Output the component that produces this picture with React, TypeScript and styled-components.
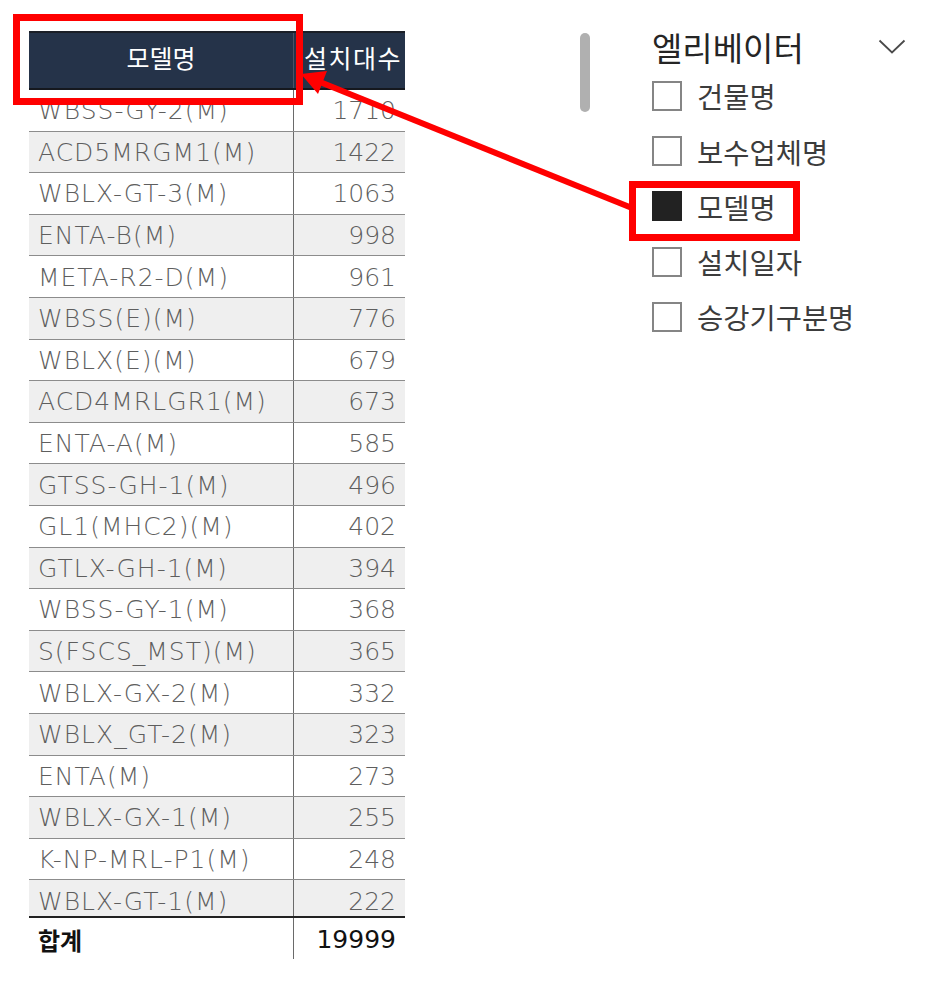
import React from "react";
import styled, { createGlobalStyle } from "styled-components";

const Global = createGlobalStyle`
  html, body { margin: 0; padding: 0; background: #ffffff; }
  body { font-family: "Noto Sans CJK KR", "Noto Sans", sans-serif; }
  #root { width: 940px; height: 985px; }
`;

const rows: [string, number][] = [
  ["WBSS-GY-2(M)", 1710],
  ["ACD5MRGM1(M)", 1422],
  ["WBLX-GT-3(M)", 1063],
  ["ENTA-B(M)", 998],
  ["META-R2-D(M)", 961],
  ["WBSS(E)(M)", 776],
  ["WBLX(E)(M)", 679],
  ["ACD4MRLGR1(M)", 673],
  ["ENTA-A(M)", 585],
  ["GTSS-GH-1(M)", 496],
  ["GL1(MHC2)(M)", 402],
  ["GTLX-GH-1(M)", 394],
  ["WBSS-GY-1(M)", 368],
  ["S(FSCS_MST)(M)", 365],
  ["WBLX-GX-2(M)", 332],
  ["WBLX_GT-2(M)", 323],
  ["ENTA(M)", 273],
  ["WBLX-GX-1(M)", 255],
  ["K-NP-MRL-P1(M)", 248],
  ["WBLX-GT-1(M)", 222],
];

const fields = ["건물명", "보수업체명", "모델명", "설치일자", "승강기구분명"];

const Page = styled.div`
  position: relative;
  width: 940px;
  height: 985px;
  display: flex;
  align-items: flex-start;
  overflow: hidden;
`;

const Table = styled.div`
  margin: 31px 0 0 29px;
  width: 376px;
  display: flex;
  flex-direction: column;
  position: relative;
`;

const HeaderRow = styled.div`
  display: grid;
  grid-template-columns: 265px 111px;
  height: 59px;
  background: #253349;
  border-top: 2px solid #1b1f27;
  border-bottom: 2px solid #15181e;
  box-sizing: border-box;
`;

const HeaderCell = styled.div<{ $align: "center" | "right" }>`
  display: flex;
  align-items: center;
  justify-content: ${(p) => (p.$align === "center" ? "center" : "flex-end")};
  padding: 0 ${(p) => (p.$align === "center" ? "0" : "3px")} 8px 0;
  color: #ffffff;
  font-size: 25px;
  letter-spacing: ${(p) => (p.$align === "center" ? "0" : "1.5px")};
  white-space: nowrap;
  overflow: hidden;
  border-right: ${(p) => (p.$align === "center" ? "1px solid #4a5466" : "none")};
`;

const Body = styled.div`
  height: 826px;
  overflow: hidden;
`;

const Row = styled.div<{ $shade: boolean }>`
  display: grid;
  grid-template-columns: 265px 111px;
  height: 41.6px;
  box-sizing: border-box;
  background: ${(p) => (p.$shade ? "#efefef" : "#ffffff")};
  border-bottom: 1px solid #8c8c8c;
`;

const Cell = styled.div<{ $num?: boolean; $bold?: boolean }>`
  display: flex;
  align-items: center;
  justify-content: ${(p) => (p.$num ? "flex-end" : "flex-start")};
  padding: ${(p) => (p.$num ? "1px 9px 0 0" : "1px 0 0 9px")};
  font-family: "DejaVu Sans", "Noto Sans CJK KR", sans-serif;
  font-size: 25px;
  font-weight: 200;
  letter-spacing: ${(p) => (p.$num ? "0" : "1px")};
  color: #5e5e5e;
  white-space: nowrap;
  overflow: hidden;
  border-right: ${(p) => (p.$num ? "none" : "1px solid #6a6a6a")};
`;

const TotalRow = styled.div`
  display: grid;
  grid-template-columns: 265px 111px;
  height: 41px;
  border-top: 2px solid #222222;
`;

const TotalCell = styled(Cell)`
  font-family: ${(p) => (p.$bold ? `"Noto Sans CJK KR", sans-serif` : `"DejaVu Sans", sans-serif`)};
  font-size: ${(p) => (p.$bold ? "24px" : "25px")};
  letter-spacing: 0;
  color: #111111;
  font-weight: ${(p) => (p.$bold ? 700 : 400)};
`;

const ScrollThumb = styled.div`
  margin: 33px 0 0 175px;
  width: 10px;
  height: 79px;
  border-radius: 5px;
  background: #b0b0b0;
  flex: none;
`;

const Filter = styled.div`
  margin: 27px 0 0 62px;
  width: 254px;
  display: flex;
  flex-direction: column;
`;

const FilterHead = styled.div`
  display: flex;
  justify-content: space-between;
  align-items: flex-start;
  height: 40px;
`;

const FilterTitle = styled.div`
  font-size: 33px;
  line-height: 40px;
  color: #252525;
`;

const Chevron = styled.svg`
  margin-top: 12px;
`;

const FieldList = styled.div`
  margin-top: 1.4px;
  display: flex;
  flex-direction: column;
`;

const FieldRow = styled.div`
  height: 55.2px;
  display: flex;
  align-items: center;
  gap: 15px;
`;

const Box = styled.div<{ $checked: boolean }>`
  width: 30px;
  height: 30px;
  box-sizing: border-box;
  border: 2px solid ${(p) => (p.$checked ? "#222222" : "#858585")};
  background: ${(p) => (p.$checked ? "#222222" : "#ffffff")};
  flex: none;
`;

const FieldLabel = styled.span`
  font-size: 28.5px;
  color: #3c3c3c;
`;

const Overlay = styled.svg`
  position: absolute;
  left: 0;
  top: 0;
  pointer-events: none;
`;

export default function App() {
  return (
    <Page>
      <Global />
      <Table>
        <HeaderRow>
          <HeaderCell $align="center">모델명</HeaderCell>
          <HeaderCell $align="right">설치대수</HeaderCell>
        </HeaderRow>
        <Body>
          {rows.map(([name, n], i) => (
            <Row key={name} $shade={i % 2 === 1}>
              <Cell>{name}</Cell>
              <Cell $num>{n}</Cell>
            </Row>
          ))}
        </Body>
        <TotalRow>
          <TotalCell $bold>합계</TotalCell>
          <TotalCell $num>19999</TotalCell>
        </TotalRow>
      </Table>
      <ScrollThumb />
      <Filter>
        <FilterHead>
          <FilterTitle>엘리베이터</FilterTitle>
          <Chevron width="28" height="16" viewBox="0 0 28 16">
            <polyline points="1.5,1.5 14,13.5 26.5,1.5" fill="none" stroke="#4a4a4a" strokeWidth="1.8" />
          </Chevron>
        </FilterHead>
        <FieldList>
          {fields.map((f) => (
            <FieldRow key={f}>
              <Box $checked={f === "모델명"} />
              <FieldLabel>{f}</FieldLabel>
            </FieldRow>
          ))}
        </FieldList>
      </Filter>
      <Overlay width="940" height="985" viewBox="0 0 940 985">
        <rect x="16.5" y="17.5" width="283" height="84" fill="none" stroke="#ff0000" strokeWidth="7" />
        <rect x="632.5" y="184.5" width="164" height="53" fill="none" stroke="#ff0000" strokeWidth="7" />
        <line x1="632" y1="208" x2="310" y2="78" stroke="#ff0000" strokeWidth="6" />
        <polygon points="301,74 327,71 318,94" fill="#ff0000" />
      </Overlay>
    </Page>
  );
}
